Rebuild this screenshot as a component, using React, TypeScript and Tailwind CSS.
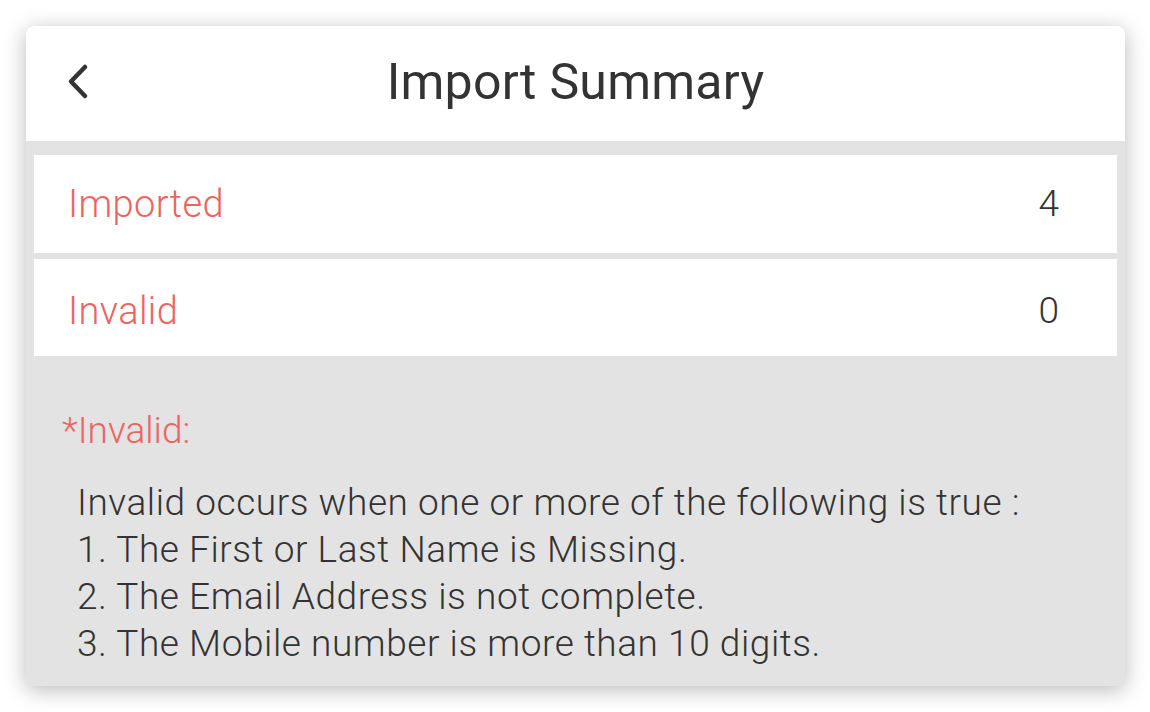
import React from "react";

export default function App() {
  return (
    <div className="w-[1150px] h-[712px] bg-white pt-[26px] pl-[26px]" style={{ fontFamily: "Roboto, 'Noto Sans', sans-serif" }}>
      <div className="w-[1099px] h-[660px] rounded-[8px] overflow-hidden bg-[#e3e3e3] shadow-[0_4px_22px_rgba(0,0,0,0.28)] flex flex-col">
        <div className="h-[115px] bg-white relative flex items-center justify-center shrink-0">
          <svg className="absolute left-[38px] top-[36px]" width="30" height="40" viewBox="0 0 30 40">
            <path d="M21 5 L7 19.5 L21 34" fill="none" stroke="#333333" strokeWidth="4.5" strokeLinecap="round" strokeLinejoin="round" />
          </svg>
          <div className="text-[50px] font-normal tracking-[0.005em] text-[#333333] leading-none mt-[-4px]">Import Summary</div>
        </div>
        <div className="pt-[14px] px-[8px] flex flex-col gap-[6px]">
          <div className="h-[98px] bg-white flex items-center justify-between pl-[34px] pr-[58px]">
            <span className="text-[38px] font-light tracking-[0.01em] text-[#ec6462]">Imported</span>
            <span className="text-[37px] font-light text-[#333333]">4</span>
          </div>
          <div className="h-[97px] bg-white flex items-center justify-between pl-[34px] pr-[58px] pt-[7px]">
            <span className="text-[38px] font-light tracking-[0.01em] text-[#ec6462]">Invalid</span>
            <span className="text-[37px] font-light text-[#333333]">0</span>
          </div>
        </div>
        <div className="pl-[36px] pt-[56px] text-[37px] font-light leading-none text-[#ec6462]">*Invalid:</div>
        <div className="pl-[51px] pt-[30px] text-[37px] font-light tracking-[0.015em] leading-[47px] text-[#333333]">
          <div>Invalid occurs when one or more of the following is true :</div>
          <div>1. The First or Last Name is Missing.</div>
          <div>2. The Email Address is not complete.</div>
          <div>3. The Mobile number is more than 10 digits.</div>
        </div>
      </div>
    </div>
  );
}
